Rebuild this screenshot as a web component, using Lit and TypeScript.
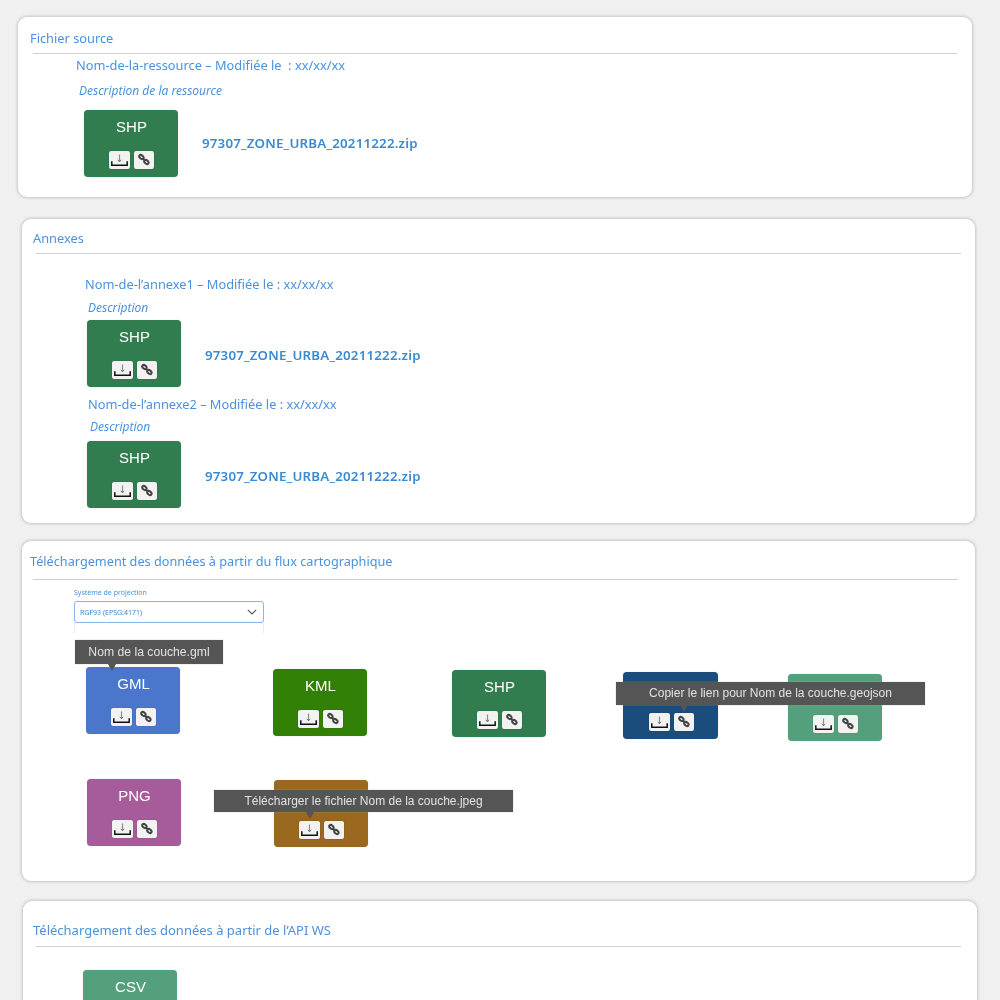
import { LitElement, html, css } from "lit";
import { customElement } from "lit/decorators.js";

const dl = html`<svg viewBox="0 0 21 18" width="21" height="18" aria-hidden="true"><path d="M10.5 3.5v7" stroke="#8c8c8c" stroke-width="1.2" fill="none"/><path d="M8.8 8.8l1.7 2 1.7-2" stroke="#666" stroke-width=".9" fill="none"/><path d="M2.8 10.3v4h15.4v-4" stroke="#111" stroke-width="1.5" fill="none"/></svg>`;
const link = html`<svg viewBox="0 0 20 18" width="20" height="18" aria-hidden="true"><g fill="none" stroke="#444" stroke-width="2"><ellipse cx="7.4" cy="6" rx="2.4" ry="1.7" transform="rotate(40 7.4 6)"/><ellipse cx="12.4" cy="11" rx="2.4" ry="1.7" transform="rotate(40 12.4 11)"/><path d="M9 7.6l2 2"/></g></svg>`;

const tile = (label: string, cls: string, tip?: unknown) => html`
  <div class="tile ${cls}">
    <div class="lbl">${label}</div>
    <div class="btns"><span class="btn">${dl}</span><span class="btn">${link}</span></div>
    ${tip ?? ""}
  </div>`;

const FILE = "97307_ZONE_URBA_20211222.zip";

@customElement("app-root")
export class AppRoot extends LitElement {
  static styles = css`
    :host { display: block; height: 1000px; overflow: hidden; background: #f0f0f0; font-family: "Noto Sans", "Open Sans", sans-serif; color: #4a92de; padding-top: 17px; box-sizing: border-box; filter: blur(0.4px); }
    .card { background: #fff; border-radius: 9px; box-shadow: 0 0 3px 1px rgba(0,0,0,.18); box-sizing: border-box; }
    .c1 { margin-left: 18px; width: 954px; height: 180px; }
    .c2 { margin: 22px 0 0 22px; width: 953px; height: 304px; }
    .c3 { margin: 18px 0 0 22px; width: 953px; height: 340px; }
    .c4 { margin: 20px 0 0 23px; width: 954px; height: 300px; }
    .title { font-size: 12.8px; line-height: 18px; white-space: nowrap; }
    .rule { height: 1px; background: #cfcfcf; }
    .c1 .title { padding: 12px 0 6px 12px; }
    .c1 .rule { margin: 0 15px; }
    .c2 .title { padding: 10px 0 6px 11px; }
    .c2 .rule { margin: 0 14px; }
    .c3 .title { padding: 11px 0 9px 8px; font-size: 12.7px; }
    .c3 .rule { margin: 0 17px 0 11px; }
    .c4 .title { padding: 20px 0 7px 10px; font-size: 13px; }
    .c4 .rule { margin: 0 16px 0 13px; }
    .name { font-size: 12.8px; line-height: 16px; white-space: pre; }
    .desc { font-size: 12px; line-height: 14px; font-style: italic; white-space: nowrap; }
    .file { font-size: 13.3px; font-weight: 600; color: #3a8ad2; white-space: nowrap; letter-spacing: .2px; }
    .row { display: flex; align-items: center; }
    .tile { position: relative; width: 94px; height: 67px; border-radius: 4px; flex: none; display: flex; flex-direction: column; align-items: center; box-sizing: border-box; padding: 7px 0 8px 1px; box-shadow: 0 0 1px rgba(0,0,0,.3); }
    .lbl { color: #fff; font-size: 15px; line-height: 20px; min-height: 20px; font-family: "Liberation Sans", Arial, sans-serif; }
    .btns { margin-top: auto; display: flex; gap: 4px; }
    .btn { background: #f2f2f2; display: flex; border-radius: 2px; box-shadow: 0 0 1px rgba(0,0,0,.4); }
    .green { background: #317d50; }
    .blue { background: #4a76cc; }
    .kml { background: #327f06; }
    .navy { background: #1a4c7c; }
    .teal { background: #55a07c; }
    .purple { background: #a65c9b; }
    .brown { background: #9a681f; }

    .r1 { padding: 3px 0 0 58px; }
    .r1 .desc { margin: 11px 0 0 3px; }
    .r1 .row { margin: 12px 0 0 8px; }
    .r1 .file { margin: 0 0 1px 24px; }
    .r2a { padding: 22px 0 0 63px; }
    .r2a .desc { margin: 9px 0 0 3px; }
    .r2a .row { margin: 5px 0 0 2px; }
    .r2a .file { margin: 3px 0 0 24px; }
    .r2b { padding: 9px 0 0 66px; }
    .r2b .desc { margin: 8px 0 0 2px; }
    .r2b .row { margin: 7px 0 0 -1px; }
    .r2b .file { margin: 3px 0 0 24px; }

    .sel-wrap { margin: 9px 0 0 52px; width: 190px; }
    .sel-lbl { font-size: 7px; line-height: 8px; margin-bottom: 4px; }
    .sel { height: 22px; border: 1.5px solid #8ab4ee; border-radius: 3px; box-sizing: border-box; display: flex; align-items: center; justify-content: space-between; padding: 0 6px 0 5px; font-size: 7px; color: #3a8ad2; }
    .sel svg { display: block; }
    .drop { height: 10px; border: solid #ececec; border-width: 0 1px; }
    .tiles { display: flex; align-items: flex-start; padding-left: 64px; }
    .t1 { margin-top: 34px; }
    .t2 { margin-top: 38px; }
    .kmlpos { margin: 2px 0 0 93px; }
    .shppos { margin: 3px 0 0 85px; }
    .navypos { margin: 5px 0 0 77px; width: 95px; }
    .tealpos { margin: 7px 0 0 70px; }
    .brownpos { margin: 1px 0 0 93px; }
    .pngpos { margin-left: 1px; }
    .csv { margin: 23px 0 0 60px; }

    .tip { position: absolute; z-index: 2; background: #555; color: #e2e2e2; font-family: "Liberation Sans", Arial, sans-serif; font-size: 12px; text-align: center; white-space: nowrap; box-shadow: 0 0 1px #aaa; box-sizing: border-box; }
    .tip::after { content: ""; position: absolute; top: 100%; border: 4px solid transparent; border-top: 7px solid #555; border-bottom: 0; }
    .tip-gml { left: -11px; top: -27px; width: 148px; height: 24px; line-height: 24px; font-size: 12.2px; }
    .tip-gml::after { left: 33px; }
    .tip-geo { left: -7px; top: 10px; width: 309px; height: 23px; line-height: 23px; }
    .tip-geo::after { left: 64px; }
    .tip-jpg { left: -60px; top: 10px; width: 299px; height: 22px; line-height: 22px; }
    .tip-jpg::after { left: 92px; }
  `;

  render() {
    return html`
      <section class="card c1">
        <div class="title">Fichier source</div>
        <div class="rule"></div>
        <div class="r1">
          <div class="name">Nom-de-la-ressource – Modifiée le  : xx/xx/xx</div>
          <div class="desc">Description de la ressource</div>
          <div class="row">${tile("SHP", "green")}<span class="file">${FILE}</span></div>
        </div>
      </section>

      <section class="card c2">
        <div class="title">Annexes</div>
        <div class="rule"></div>
        <div class="r2a">
          <div class="name">Nom-de-l’annexe1 – Modifiée le : xx/xx/xx</div>
          <div class="desc">Description</div>
          <div class="row">${tile("SHP", "green")}<span class="file">${FILE}</span></div>
        </div>
        <div class="r2b">
          <div class="name">Nom-de-l’annexe2 – Modifiée le : xx/xx/xx</div>
          <div class="desc">Description</div>
          <div class="row">${tile("SHP", "green")}<span class="file">${FILE}</span></div>
        </div>
      </section>

      <section class="card c3">
        <div class="title">Téléchargement des données à partir du flux cartographique</div>
        <div class="rule"></div>
        <div class="sel-wrap">
          <div class="sel-lbl">Système de projection</div>
          <div class="sel">
            <span>RGF93 (EPSG:4171)</span>
            <svg viewBox="0 0 10 6" width="10" height="6" aria-hidden="true"><path d="M.8 .8L5 5l4.2-4.2" fill="none" stroke="#555" stroke-width="1.1"/></svg>
          </div>
          <div class="drop"></div>
        </div>
        <div class="tiles t1">
          ${tile("GML", "blue", html`<div class="tip tip-gml">Nom de la couche.gml</div>`)}
          ${tile("KML", "kml kmlpos")}
          ${tile("SHP", "green shppos")}
          ${tile("", "navy navypos", html`<div class="tip tip-geo">Copier le lien pour Nom de la couche.geojson</div>`)}
          ${tile("", "teal tealpos")}
        </div>
        <div class="tiles t2">
          ${tile("PNG", "purple pngpos")}
          ${tile("", "brown brownpos", html`<div class="tip tip-jpg">Télécharger le fichier Nom de la couche.jpeg</div>`)}
        </div>
      </section>

      <section class="card c4">
        <div class="title">Téléchargement des données à partir de l’API WS</div>
        <div class="rule"></div>
        ${tile("CSV", "teal csv")}
      </section>
    `;
  }
}
